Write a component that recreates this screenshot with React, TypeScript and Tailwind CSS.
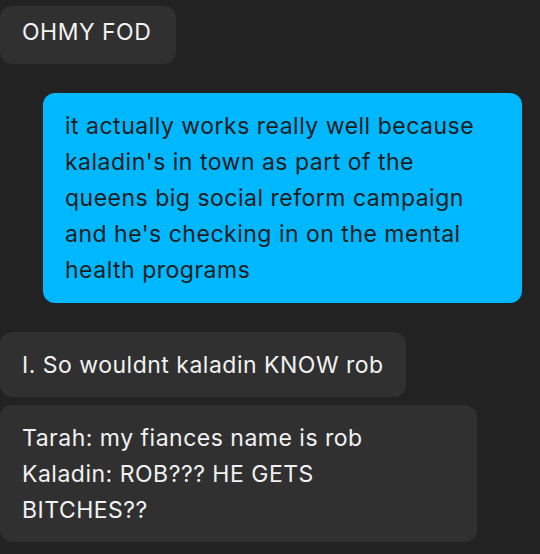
import React from "react";

const font = { fontFamily: "Inter, 'Noto Sans', sans-serif" };

export default function App() {
  return (
    <div
      className="w-[540px] h-[554px] bg-[#222222] overflow-hidden flex flex-col text-[23px] leading-[36px] tracking-[0.5px]"
      style={font}
    >
      <div className="pt-[6px] flex">
        <div className="bg-[#303030] text-[#f2f2f2] rounded-[12px] pl-[22px] pr-[25px] pt-[8px] pb-[14px]">
          OHMY FOD
        </div>
      </div>
      <div className="mt-[29px] flex justify-end pr-[18px]">
        <div className="w-[479px] bg-[#00b8ff] text-[#1c1c1c] rounded-[12px] px-[22px] py-[15px]">
          it actually works really well because kaladin's in town as part of the queens big social reform campaign and he's checking in on the mental health programs
        </div>
      </div>
      <div className="mt-[29px] flex flex-col items-start gap-[8px]">
        <div className="bg-[#303030] text-[#f2f2f2] rounded-[12px] px-[22px] py-[14.5px]">
          I. So wouldnt kaladin KNOW rob
        </div>
        <div className="w-[477px] bg-[#303030] text-[#f2f2f2] rounded-[12px] px-[22px] py-[14.5px]">
          Tarah: my fiances name is rob
          <br />
          Kaladin: ROB??? HE GETS
          <br />
          BITCHES??
        </div>
      </div>
    </div>
  );
}
